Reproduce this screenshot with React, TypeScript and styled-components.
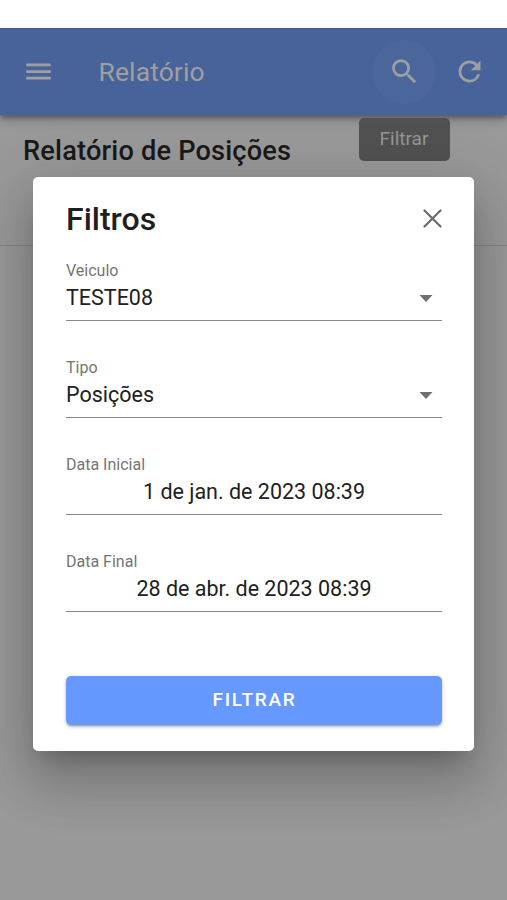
import React from "react";
import styled, { createGlobalStyle } from "styled-components";

const Global = createGlobalStyle`
  * { box-sizing: border-box; }
  body { margin: 0; background: #999; font-family: Roboto, "Liberation Sans", sans-serif; }
`;

const Screen = styled.div`
  position: relative;
  width: 507px;
  height: 900px;
  overflow: hidden;
  background: #999;
`;

const StatusStrip = styled.div`
  position: relative;
  height: 28px;
  background: #fff;
`;

const AppBar = styled.header`
  height: 87px;
  display: flex;
  align-items: center;
  padding: 0 21px 1px 23px;
  background: #476399;
  color: #a09f9f;
  border-top: 1px solid #3f5a94;
  box-shadow: 0 3px 5px rgba(0, 0, 0, 0.32), 0 5px 12px rgba(0, 0, 0, 0.16);
`;

const BarTitle = styled.h1`
  flex: 1;
  margin: 0 0 0 44.5px;
  font-size: 26.5px;
  line-height: 32px;
  font-weight: 400;
  letter-spacing: 0.1px;
`;

const IconButton = styled.button<{ $size: number; $active?: boolean }>`
  display: flex;
  flex: none;
  align-items: center;
  justify-content: center;
  width: ${(p) => p.$size}px;
  height: ${(p) => p.$size}px;
  padding: 0;
  border: 0;
  border-radius: 50%;
  color: inherit;
  background: ${(p) => (p.$active ? "#4b669b" : "transparent")};
`;

const SearchAnchor = styled.div`
  position: relative;
  margin-right: 17px;
`;

const Tooltip = styled.div`
  position: absolute;
  top: 78px;
  left: -13.5px;
  width: 91px;
  height: 43px;
  border-radius: 5px;
  background: #515151;
  color: #969696;
  font-size: 19px;
  line-height: 42px;
  text-align: center;
`;

const PageHeader = styled.section`
  height: 131px;
  padding: 20px 23px;
  border-bottom: 1px solid #838383;
`;

const PageTitle = styled.h2`
  margin: 0;
  font-size: 27.2px;
  line-height: 32px;
  font-weight: 500;
  letter-spacing: 0.18px;
  color: #191919;
`;

const Overlay = styled.div`
  position: absolute;
  inset: 0;
  display: flex;
  align-items: flex-start;
  justify-content: center;
  padding: 177px 33px 0;
`;

const Dialog = styled.form`
  width: 441px;
  height: 574px;
  padding: 22px 32px 26px 33px;
  display: flex;
  flex-direction: column;
  border-radius: 5px;
  background: #fff;
  box-shadow: 0 15px 20px -9px rgba(0, 0, 0, 0.2), 0 33px 52px 4px rgba(0, 0, 0, 0.14),
    0 12px 63px 11px rgba(0, 0, 0, 0.12);
`;

const DialogHeader = styled.header`
  display: flex;
  align-items: center;
  justify-content: space-between;
  height: 40px;
  margin-bottom: 22px;
`;

const DialogTitle = styled.h3`
  margin: 0;
  font-size: 32px;
  line-height: 40px;
  font-weight: 500;
  color: #1f1f1f;
`;

const CloseButton = styled.button`
  display: flex;
  padding: 0;
  margin-bottom: 1px;
  border: 0;
  background: none;
  color: #6b6b6b;
`;

const Field = styled.div`
  height: 60px;
  padding-top: 1px;
  margin-bottom: 37px;
  border-bottom: 1px solid #888;
`;

const Label = styled.div`
  font-size: 16px;
  line-height: 18px;
  color: #757575;
`;

const Value = styled.div<{ $centered?: boolean }>`
  display: flex;
  align-items: center;
  justify-content: ${(p) => (p.$centered ? "center" : "space-between")};
  padding-right: ${(p) => (p.$centered ? 0 : 9)}px;
  height: 36px;
  font-size: 21.5px;
  line-height: 36px;
  color: #212121;
`;

const Submit = styled.button`
  height: 49px;
  margin-top: auto;
  flex: none;
  border: 0;
  padding: 0 0 2px 1px;
  border-radius: 5px;
  background: #6699ff;
  color: #fff;
  font: 500 19px/47px Roboto, "Liberation Sans", sans-serif;
  letter-spacing: 1.7px;
  box-shadow: 0 3px 2px -2px rgba(0, 0, 0, 0.2), 0 2px 3px rgba(0, 0, 0, 0.16), 0 1px 5px rgba(0, 0, 0, 0.12);
`;

const MenuIcon = () => (
  <svg width="31" height="31" viewBox="0 0 24 24" fill="currentColor">
    <path d="M2.5 18.2h19v-2.1h-19v2.1zm0-5.1h19V11h-19v2.1zm0-7.3v2.1h19V5.8z" />
  </svg>
);

const SearchIcon = () => (
  <svg width="33" height="33" viewBox="0 0 24 24" fill="currentColor">
    <path d="M15.5 14h-.79l-.28-.27A6.471 6.471 0 0 0 16 9.5 6.5 6.5 0 1 0 9.5 16c1.61 0 3.09-.59 4.23-1.57l.27.28v.79l5 4.99L20.49 19l-4.99-5zm-6 0C7.01 14 5 11.99 5 9.5S7.01 5 9.5 5 14 7.01 14 9.5 11.99 14 9.5 14z" />
  </svg>
);

const RefreshIcon = () => (
  <svg width="33" height="33" viewBox="0 0 24 24" fill="currentColor">
    <path d="M17.65 6.35A7.958 7.958 0 0 0 12 4a8 8 0 1 0 7.73 10h-2.08A5.99 5.99 0 0 1 12 18a6 6 0 1 1 0-12c1.66 0 3.14.69 4.22 1.78L13 11h7V4l-2.35 2.35z" />
  </svg>
);

const CloseIcon = () => (
  <svg width="19" height="19" viewBox="0 0 19 19" fill="none" stroke="currentColor" strokeWidth="2.2" strokeLinecap="round">
    <path d="M1.5 1.5l16 16M17.5 1.5l-16 16" />
  </svg>
);

const Caret = () => (
  <svg width="14" height="7" viewBox="0 0 14 7" fill="#6f6f6f">
    <path d="M0.5 0h13L7 7z" />
  </svg>
);

const fields = [
  { label: "Veiculo", value: "TESTE08", select: true },
  { label: "Tipo", value: "Posições", select: true },
  { label: "Data Inicial", value: "1 de jan. de 2023 08:39", select: false },
  { label: "Data Final", value: "28 de abr. de 2023 08:39", select: false },
];

export default function App() {
  return (
    <>
      <Global />
      <Screen>
        <StatusStrip />
        <AppBar>
          <IconButton $size={31} aria-label="Menu">
            <MenuIcon />
          </IconButton>
          <BarTitle>Relatório</BarTitle>
          <SearchAnchor>
            <IconButton $size={64} $active aria-label="Filtrar">
              <SearchIcon />
            </IconButton>
            <Tooltip>Filtrar</Tooltip>
          </SearchAnchor>
          <IconButton $size={33} aria-label="Atualizar">
            <RefreshIcon />
          </IconButton>
        </AppBar>
        <PageHeader>
          <PageTitle>Relatório de Posições</PageTitle>
        </PageHeader>
        <Overlay>
          <Dialog>
            <DialogHeader>
              <DialogTitle>Filtros</DialogTitle>
              <CloseButton type="button" aria-label="Fechar">
                <CloseIcon />
              </CloseButton>
            </DialogHeader>
            {fields.map((f) => (
              <Field key={f.label}>
                <Label>{f.label}</Label>
                <Value $centered={!f.select}>
                  {f.value}
                  {f.select && <Caret />}
                </Value>
              </Field>
            ))}
            <Submit type="button">FILTRAR</Submit>
          </Dialog>
        </Overlay>
      </Screen>
    </>
  );
}
